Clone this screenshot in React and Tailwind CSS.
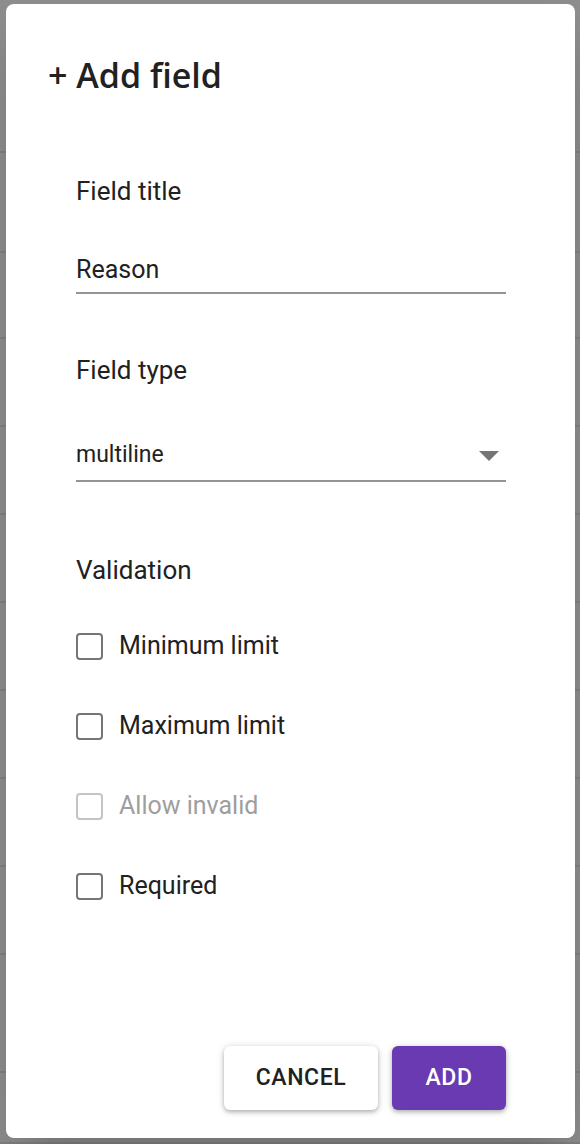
import React from 'react';

const rows = [153, 100, 86, 88, 88, 88, 88, 88, 88, 88, 118, 71];

const Checkbox = ({ label, disabled }) => (
  <label className="flex items-center h-[80px]">
    <span
      className={`w-[27px] h-[27px] rounded-[4px] border-2 ${disabled ? 'border-[#c4c4c4]' : 'border-[#757575]'}`}
    />
    <span className={`ml-[16px] text-[25px] ${disabled ? 'text-[#9e9e9e]' : 'text-[#212121]'}`}>{label}</span>
  </label>
);

const App = () => {
  return (
    <div className="relative h-[1144px] w-[580px] overflow-hidden bg-[#8e8e8e]" style={{ fontFamily: 'Roboto, "Liberation Sans", sans-serif' }}>
      {/* table rows behind the dialog */}
      <div className="flex flex-col">
        {rows.map((h, i) => (
          <div key={i} className="border-b-2 border-[#818181]" style={{ height: h }} />
        ))}
      </div>

      {/* Dialog */}
      <div className="absolute left-[6px] top-[4px] w-[569px] h-[1134px] bg-white rounded-[8px] shadow-2xl flex flex-col">
        <h2
          className="pl-[42px] pt-[49px] text-[34px] font-semibold text-[#212121] leading-[44px]"
          style={{ fontFamily: '"Open Sans", "Noto Sans", sans-serif' }}
        >
          + Add field
        </h2>

        <div className="pl-[70px] pr-[69px] flex flex-col">
          <div className="mt-[78px] text-[26px] text-[#212121] leading-[32px]">Field title</div>
          <div className="mt-[44px] h-[43px] border-b-2 border-[#949494] text-[25px] text-[#212121] leading-[38px]">Reason</div>

          <div className="mt-[60px] text-[26px] text-[#212121] leading-[32px]">Field type</div>
          <div className="mt-[50px] h-[46px] border-b-2 border-[#949494] flex items-start justify-between">
            <span className="text-[23px] text-[#212121] leading-[38px]">multiline</span>
            <svg width="20" height="10" viewBox="0 0 20 10" className="mt-[15px] mr-[7px]">
              <path d="M0 0 L20 0 L10 10 Z" fill="#757575" />
            </svg>
          </div>

          <div className="mt-[72px] text-[26px] text-[#212121] leading-[32px]">Validation</div>
          <div className="mt-[20px] flex flex-col">
            <Checkbox label="Minimum limit" />
            <Checkbox label="Maximum limit" />
            <Checkbox label="Allow invalid" disabled />
            <Checkbox label="Required" />
          </div>
        </div>

        <div className="mt-auto mb-[28px] pr-[69px] flex justify-end gap-[14px]">
          <button className="w-[154px] h-[64px] rounded-[6px] bg-white text-[#212121] text-[23px] font-medium tracking-[0.6px] shadow-[0_2px_4px_rgba(0,0,0,0.25),0_1px_8px_rgba(0,0,0,0.12)]">
            CANCEL
          </button>
          <button className="w-[114px] h-[64px] rounded-[6px] bg-[#6a3ab2] text-white text-[23px] font-medium tracking-[0.6px] shadow-[0_2px_4px_rgba(0,0,0,0.25),0_1px_8px_rgba(0,0,0,0.12)]">
            ADD
          </button>
        </div>
      </div>
    </div>
  );
};

export default App;
